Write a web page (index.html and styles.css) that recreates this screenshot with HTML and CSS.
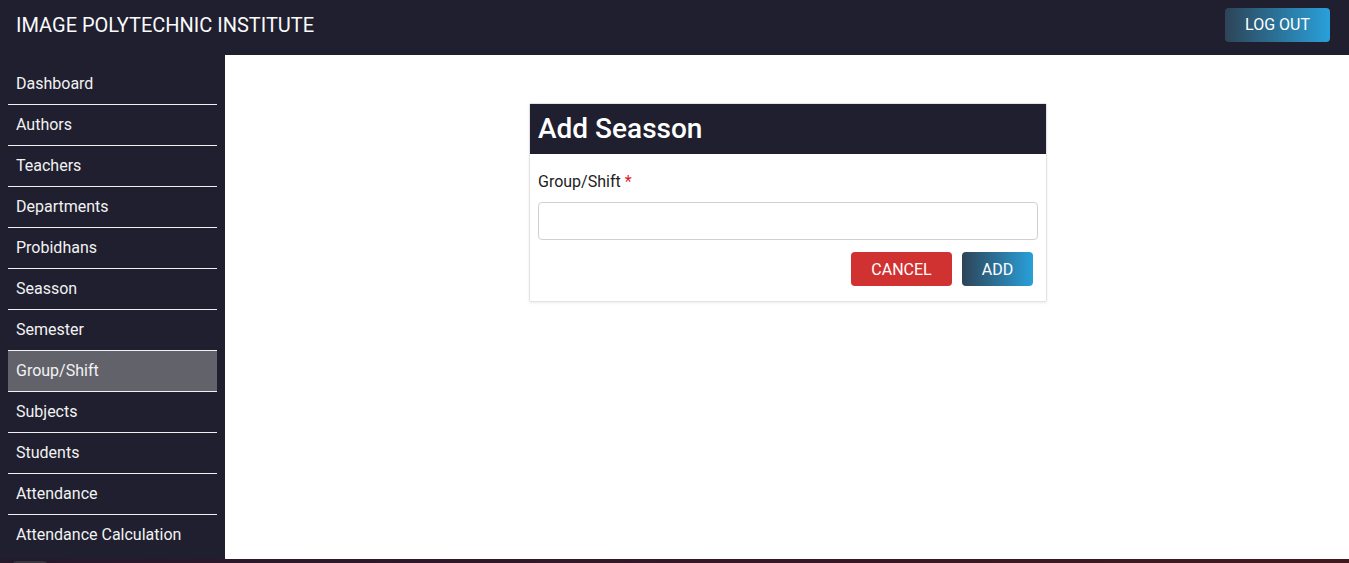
FILE: index.html
```html
<!DOCTYPE html>
<html lang="en">
<head>
<meta charset="utf-8">
<title>Image Polytechnic Institute</title>
<link rel="stylesheet" href="styles.css">
</head>
<body>
<header class="topbar">
  <div class="brand">IMAGE POLYTECHNIC INSTITUTE</div>
  <button class="btn btn-grad logout">LOG OUT</button>
</header>
<div class="layout">
  <nav class="sidebar">
    <a class="nav-item">Dashboard</a>
    <a class="nav-item">Authors</a>
    <a class="nav-item">Teachers</a>
    <a class="nav-item">Departments</a>
    <a class="nav-item">Probidhans</a>
    <a class="nav-item">Seasson</a>
    <a class="nav-item">Semester</a>
    <a class="nav-item active">Group/Shift</a>
    <a class="nav-item">Subjects</a>
    <a class="nav-item">Students</a>
    <a class="nav-item">Attendance</a>
    <a class="nav-item last">Attendance Calculation</a>
  </nav>
  <main class="content">
    <section class="card">
      <h2 class="card-title">Add Seasson</h2>
      <form class="card-body">
        <label class="field-label">Group/Shift <span class="req">*</span></label>
        <input class="field-input" type="text">
        <div class="actions">
          <button type="button" class="btn btn-cancel">CANCEL</button>
          <button type="button" class="btn btn-grad add">ADD</button>
        </div>
      </form>
    </section>
  </main>
</div>
<footer class="footer">
  <div class="footer-inner"><span class="footer-chip"></span></div>
</footer>
</body>
</html>
```
FILE: styles.css
```css
* { box-sizing: border-box; }
html, body { margin: 0; padding: 0; }
body {
  font-family: Roboto, "Noto Sans", "Liberation Sans", sans-serif;
  background: #1f1f2f;
  color: #f2f2f2;
}
.topbar {
  height: 55px;
  background: #1f1f2f;
  display: flex;
  align-items: center;
  justify-content: space-between;
  padding: 0 19px 0 16px;
}
.brand {
  font-size: 20px;
  color: #fafafa;
  padding-bottom: 6px;
}
.btn {
  border: none;
  border-radius: 4px;
  font-family: inherit;
  font-size: 16px;
  color: #fff;
  cursor: pointer;
}
.btn-grad {
  background: linear-gradient(to right, #2d4457, #29a0da);
}
.logout {
  width: 105px;
  height: 34px;
  margin-bottom: 6px;
}
.layout {
  display: flex;
  height: 504px;
}
.sidebar {
  width: 225px;
  flex: none;
  background: #1f1f2f;
  padding: 9px 8px 0 8px;
  display: flex;
  flex-direction: column;
}
.nav-item {
  display: flex;
  align-items: center;
  height: 41px;
  padding: 0 8px 2px 8px;
  border-bottom: 1px solid #f0f0f0;
  font-size: 16px;
  color: #f2f2f2;
  text-decoration: none;
}
.nav-item.active {
  background: #62626b;
}
.nav-item.last { border-bottom: none; }
.content {
  flex: 1;
  background: #fff;
  display: flex;
  justify-content: center;
  align-items: flex-start;
  padding-top: 48px;
  padding-left: 2px;
}
.card {
  width: 518px;
  background: #fff;
  border: 1px solid #e3e3e6;
  border-radius: 2px;
  box-shadow: 0 1px 3px rgba(0,0,0,0.08);
}
.card-title {
  margin: 0;
  height: 50px;
  background: #1f1f2f;
  color: #fff;
  font-size: 28px;
  font-weight: 500;
  display: flex;
  align-items: center;
  padding: 0 8px 2px 8px;
}
.card-body {
  padding: 18px 8px 15px 8px;
  display: flex;
  flex-direction: column;
}
.field-label {
  font-size: 16px;
  color: #222;
  line-height: 20px;
}
.req { color: #e01b1b; }
.field-input {
  margin-top: 10px;
  height: 38px;
  border: 1px solid #cfd0d4;
  border-radius: 4px;
  font-size: 16px;
  padding: 0 10px;
  outline: none;
}
.actions {
  margin-top: 12px;
  display: flex;
  justify-content: flex-end;
  gap: 10px;
  padding-right: 5px;
}
.btn-cancel {
  width: 101px;
  height: 34px;
  background: #d03232;
}
.add {
  width: 71px;
  height: 34px;
}
.footer {
  height: 60px;
  background: linear-gradient(to right, #26192c, #341727 50%, #41191d);
  padding: 2px 13px;
}
.footer-chip {
  display: block;
  width: 34px;
  height: 20px;
  border-radius: 4px;
  background: #3a3440;
}
```
